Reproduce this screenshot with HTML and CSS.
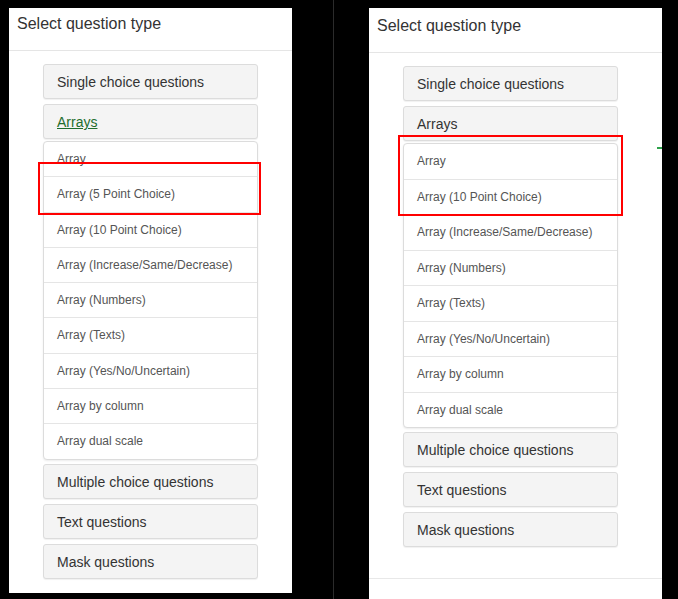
FILE: index.html
```html
<!DOCTYPE html>
<html>
<head>
<meta charset="utf-8">
<link rel="stylesheet" href="styles.css">
</head>
<body>
<div class="stage">
  <section class="panel panel-left">
    <div class="panel-head">Select question type</div>
    <div class="panel-body">
      <div class="group-btn">Single choice questions</div>
      <div class="group-btn"><a class="group-link" href="#">Arrays</a></div>
      <ul class="list">
        <li>Array</li>
        <li>Array (5 Point Choice)</li>
        <li>Array (10 Point Choice)</li>
        <li>Array (Increase/Same/Decrease)</li>
        <li>Array (Numbers)</li>
        <li>Array (Texts)</li>
        <li>Array (Yes/No/Uncertain)</li>
        <li>Array by column</li>
        <li>Array dual scale</li>
      </ul>
      <div class="group-btn">Multiple choice questions</div>
      <div class="group-btn">Text questions</div>
      <div class="group-btn">Mask questions</div>
    </div>
    <div class="mark mark-left"></div>
  </section>

  <div class="split"></div>

  <section class="panel panel-right">
    <div class="panel-head head-right">Select question type</div>
    <div class="panel-body body-right">
      <div class="group-btn">Single choice questions</div>
      <div class="group-btn">Arrays</div>
      <ul class="list list-right">
        <li>Array</li>
        <li>Array (10 Point Choice)</li>
        <li>Array (Increase/Same/Decrease)</li>
        <li>Array (Numbers)</li>
        <li>Array (Texts)</li>
        <li>Array (Yes/No/Uncertain)</li>
        <li>Array by column</li>
        <li>Array dual scale</li>
      </ul>
      <div class="group-btn">Multiple choice questions</div>
      <div class="group-btn">Text questions</div>
      <div class="group-btn">Mask questions</div>
    </div>
    <div class="panel-foot"></div>
    <div class="mark mark-right"></div>
    <div class="green-dash"></div>
  </section>
</div>
</body>
</html>
```
FILE: styles.css
```css
* { box-sizing: border-box; }
html, body {
  margin: 0;
  padding: 0;
  background: #000;
}
body {
  font-family: "Liberation Sans", Arial, sans-serif;
  color: #333;
}
.stage {
  display: flex;
  align-items: flex-start;
  width: 678px;
  height: 599px;
  overflow: hidden;
}
.panel {
  position: relative;
  background: #fff;
  margin-top: 8px;
}
.panel-left {
  margin-left: 9px;
  width: 283px;
  height: 585px;
}
.split {
  width: 1px;
  height: 599px;
  margin-left: 41px;
  background: #2b2b2b;
}
.panel-right {
  margin-left: 35px;
  width: 293px;
  height: 600px;
}
.panel-head {
  padding: 6px 8px 16px 8px;
  font-size: 16px;
  line-height: 20px;
  color: #333;
  border-bottom: 1px solid #e5e5e5;
}
.head-right {
  padding-top: 8px;
  padding-bottom: 16px;
}
.panel-body {
  padding: 13px 34px 13px 34px;
  display: flex;
  flex-direction: column;
}
.body-right {
  padding-bottom: 26px;
}
.panel-foot {
  border-top: 1px solid #e8e8e8;
}
.group-btn {
  width: 215px;
  height: 35px;
  padding: 8px 13px;
  font-size: 14px;
  line-height: 18px;
  color: #333;
  background: #f4f4f4;
  border: 1px solid #dcdcdc;
  border-radius: 3px;
  box-shadow: 0 1px 1px rgba(0,0,0,0.06);
  margin-bottom: 5px;
}
.group-link {
  color: #1f6e2e;
  text-decoration: underline;
}
.list {
  list-style: none;
  margin: -3px 0 4px 0;
  padding: 0;
  width: 215px;
  background: #fff;
  border: 1px solid #dcdcdc;
  border-radius: 4px;
  box-shadow: 0 1px 2px rgba(0,0,0,0.08);
}
.list li {
  padding: 9px 13px;
  font-size: 12px;
  line-height: 16.3px;
  color: #555;
  border-top: 1px solid #e5e5e5;
}
.list li:first-child {
  border-top: none;
}
.list-right li {
  line-height: 16.5px;
}
.mark {
  position: absolute;
  border: 2px solid #f00;
}
.mark-left {
  left: 29px;
  top: 154px;
  width: 223px;
  height: 53px;
}
.mark-right {
  left: 29px;
  top: 127px;
  width: 225px;
  height: 81px;
}
.green-dash {
  position: absolute;
  right: 0;
  top: 139px;
  width: 5px;
  height: 2px;
  background: #2ea24a;
}
```
